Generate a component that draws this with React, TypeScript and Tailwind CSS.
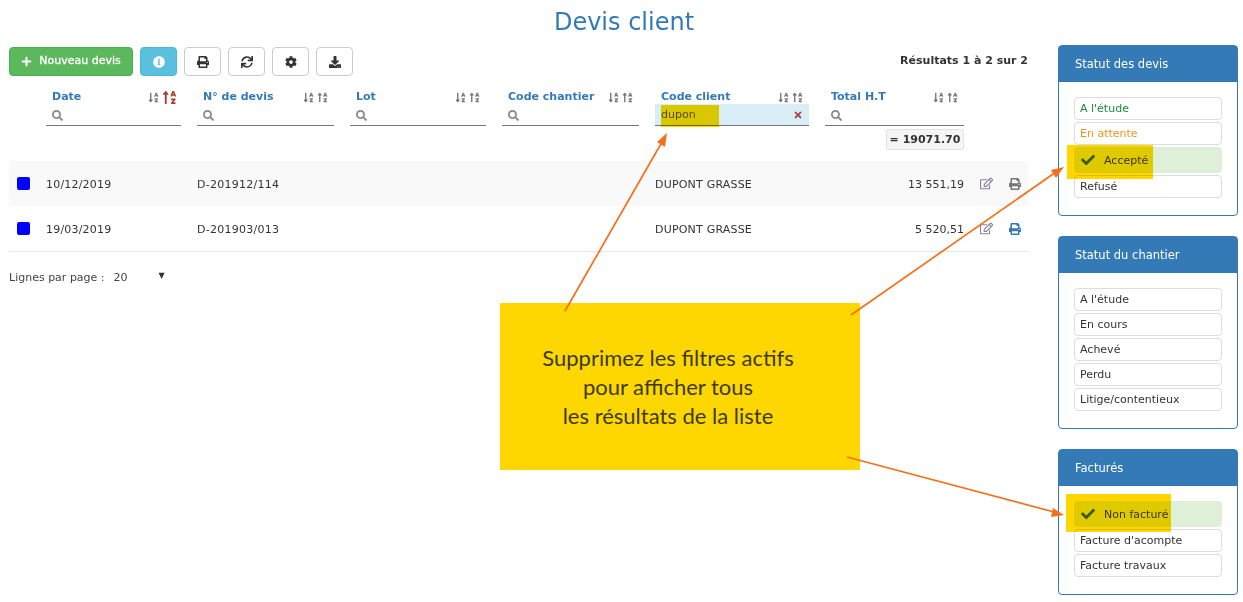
import { ReactNode } from 'react';
import {
  FaCheck,
  FaCog,
  FaDownload,
  FaInfoCircle,
  FaPlus,
  FaPrint,
  FaRegEdit,
  FaSearch,
  FaSortAlphaDown,
  FaSortAlphaUp,
  FaSync,
  FaTimes,
} from 'react-icons/fa';

const COLUMNS = 'grid grid-cols-[135px_137px_136px_137px_154px_139px] gap-x-4';

function ToolButton({ children }: { children: ReactNode }) {
  return (
    <button type="button" className="w-[37px] h-[29px] flex items-center justify-center bg-white border border-[#ccc] rounded text-[#333] text-[12px]">
      {children}
    </button>
  );
}

function HeaderCell({ label, active, value }: { label: string; active?: boolean; value?: string }) {
  return (
    <div>
      <div className="h-[18px] pt-[4px] flex items-center justify-between pl-1.5 pr-[6px]">
        <span className="font-bold text-[#337ab7]">{label}</span>
        <span className="flex items-center gap-[3px] text-[#777] text-[11px]">
          <FaSortAlphaDown />
          {active ? <FaSortAlphaUp className="text-[#a5402c] text-[15px] -mr-[2px]" /> : <FaSortAlphaUp />}
        </span>
      </div>
      <div className={`h-[22px] pt-[1px] flex items-center justify-between px-1.5 border-b border-[#777] ${value ? 'bg-[#d9edf7]' : ''}`}>
        {value ? (
          <>
            <span className="text-[#555]">{value}</span>
            <FaTimes className="text-[#a94442] text-[10px]" />
          </>
        ) : (
          <FaSearch className="text-[#888] text-[11px]" />
        )}
      </div>
    </div>
  );
}

function Row({ date, code, total, striped, printClass }: { date: string; code: string; total: string; striped?: boolean; printClass: string }) {
  return (
    <div className={`h-[45px] flex items-center text-[#333] ${striped ? 'bg-[#f9f9f9]' : ''}`}>
      <div className="w-[37px] pl-2">
        <div className="w-[13px] h-[13px] rounded-[2px] bg-[#0000ff]" />
      </div>
      <div className={`${COLUMNS} pt-[4px]`}>
        <div className="tracking-[0.2px]">{date}</div>
        <div className="tracking-[0.25px]">{code}</div>
        <div />
        <div />
        <div className="tracking-[0.2px]">DUPONT GRASSE</div>
        <div className="text-right">{total}</div>
      </div>
      <FaRegEdit className="ml-[16px] text-[#8a7f99] text-[13px]" />
      <FaPrint className={`ml-[16px] text-[12px] ${printClass}`} />
    </div>
  );
}

function StatusItem({ label, className, checked }: { label: string; className?: string; checked?: boolean }) {
  if (checked) {
    return (
      <div className="h-[26px] flex items-center pl-[7px] rounded bg-[#dff0d8] text-[#3c3c10]">
        <FaCheck className="text-[#3f6b1c] text-[14px] mr-[9px]" />
        <span className="pt-[2px]">{label}</span>
      </div>
    );
  }
  return <div className={`h-[23px] pt-[2px] flex items-center px-[5px] bg-white border border-[#ddd] rounded ${className ?? 'text-[#333]'}`}>{label}</div>;
}

function Panel({ title, children }: { title: string; children: ReactNode }) {
  return (
    <div className="border border-[#337ab7] rounded">
      <div className="h-[36px] pt-[1px] flex items-center pl-[16px] bg-[#337ab7] text-white text-[11.5px]">{title}</div>
      <div className="flex flex-col gap-[2px] pt-[15px] pb-[17px] px-[15px]">{children}</div>
    </div>
  );
}

function Annotations() {
  return (
    <div className="absolute inset-0 pointer-events-none">
      <div className="absolute left-[661px] top-[105px] w-[58px] h-[22px] bg-[#ffd700] mix-blend-multiply" />
      <div className="absolute left-[1067px] top-[145px] w-[86px] h-[34px] bg-[#ffd700] mix-blend-multiply" />
      <div className="absolute left-[1066px] top-[494px] w-[105px] h-[38px] bg-[#ffd700] mix-blend-multiply" />
      <div className="absolute left-[500px] top-[303px] w-[360px] h-[167px] flex items-center pr-6 justify-center text-center bg-[#ffd700] text-[#3d3a10] text-[22px] leading-[29px] font-['Lato',sans-serif]">
        <p>
          Supprimez les filtres actifs
          <br />
          pour afficher tous
          <br />
          les résultats de la liste
        </p>
      </div>
      <svg className="absolute inset-0" width="1243" height="602" fill="none">
        <g stroke="#f4701a" strokeWidth="1.7">
          <line x1="565" y1="311" x2="662" y2="142" />
          <line x1="851" y1="315" x2="1056" y2="172" />
          <line x1="847" y1="457" x2="1054" y2="512" />
        </g>
        <g fill="#f4701a">
          <polygon points="667,133 665,147 657,142" />
          <polygon points="1064,167 1056,178 1051,170" />
          <polygon points="1064,515 1051,517 1053,508" />
        </g>
      </svg>
    </div>
  );
}

export default function App() {
  return (
    <div className="relative w-[1243px] h-[602px] overflow-hidden bg-white text-[11px] font-['DejaVu_Sans',sans-serif]">
      <h1 className="h-[45px] pt-[6px] pl-[5px] text-center text-[24px] leading-[33px] text-[#337ab7]">Devis client</h1>
      <div className="flex pl-[9px]">
        <div className="w-[1019px] pt-[2px]">
          <div className="flex items-center gap-[7px]">
            <button type="button" className="w-[124px] h-[29px] flex items-center justify-center gap-[7px] bg-[#5cb85c] border border-[#4cae4c] rounded text-white [-webkit-text-stroke:0.3px_white]">
              <FaPlus className="text-[11px]" />
              Nouveau devis
            </button>
            <button type="button" className="w-[37px] h-[29px] flex items-center justify-center bg-[#5bc0de] border border-[#46b8da] rounded text-white text-[12px]">
              <FaInfoCircle />
            </button>
            <ToolButton><FaPrint /></ToolButton>
            <ToolButton><FaSync /></ToolButton>
            <ToolButton><FaCog /></ToolButton>
            <ToolButton><FaDownload /></ToolButton>
            <span className="ml-auto -mt-[1px] font-bold text-[#333]">Résultats 1 à 2 sur 2</span>
          </div>
          <div className="pl-[37px] pt-[10px]">
            <div className={COLUMNS}>
              <HeaderCell label="Date" active />
              <HeaderCell label="N° de devis" />
              <HeaderCell label="Lot" />
              <HeaderCell label="Code chantier" />
              <HeaderCell label="Code client" value="dupon" />
              <HeaderCell label="Total H.T" />
            </div>
          </div>
          <div className="h-[35px] w-[955px] pt-[3px] flex justify-end">
            <span className="h-[21px] w-[78px] pt-[1px] justify-center flex items-center bg-[#f5f5f5] border border-[#e3e3e3] rounded-[2px] font-bold text-[#333]">= 19071.70</span>
          </div>
          <Row striped date="10/12/2019" code="D-201912/114" total="13 551,19" printClass="text-[#777]" />
          <Row date="19/03/2019" code="D-201903/013" total="5 520,51" printClass="text-[#337ab7]" />
          <div className="border-t border-[#e7e7e7] pt-[18px] flex items-center text-[#444]">
            <span>Lignes par page :</span>
            <span className="ml-[9px]">20</span>
            <span className="ml-[31px] -mt-[5px] text-[8px] text-[#333]">▼</span>
          </div>
        </div>
        <div className="w-[180px] ml-[30px] flex flex-col gap-[20px]">
          <Panel title="Statut des devis">
            <StatusItem label="A l'étude" className="text-[#1e8a3c]" />
            <StatusItem label="En attente" className="text-[#f0941e]" />
            <StatusItem label="Accepté" checked />
            <StatusItem label="Refusé" />
          </Panel>
          <Panel title="Statut du chantier">
            <StatusItem label="A l'étude" />
            <StatusItem label="En cours" />
            <StatusItem label="Achevé" />
            <StatusItem label="Perdu" />
            <StatusItem label="Litige/contentieux" />
          </Panel>
          <Panel title="Facturés">
            <StatusItem label="Non facturé" checked />
            <StatusItem label="Facture d'acompte" />
            <StatusItem label="Facture travaux" />
          </Panel>
        </div>
      </div>
      <Annotations />
    </div>
  );
}
